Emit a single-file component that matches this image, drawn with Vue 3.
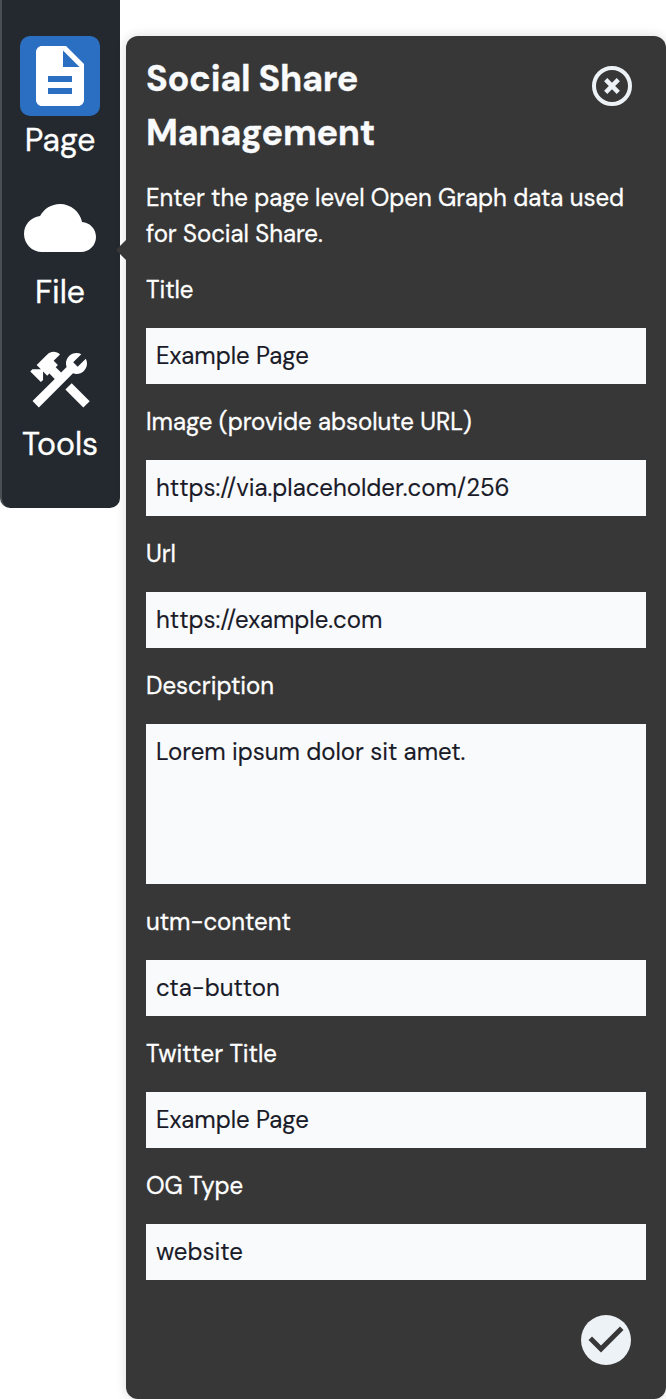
<script setup>
import { ref } from 'vue'

const tools = [
  { name: 'Page', icon: 'doc', active: true },
  { name: 'File', icon: 'cloud', active: false },
  { name: 'Tools', icon: 'build', active: false },
]

const fields = ref([
  { id: 'title', label: 'Title', value: 'Example Page' },
  { id: 'image', label: 'Image (provide absolute URL)', value: 'https://via.placeholder.com/256' },
  { id: 'url', label: 'Url', value: 'https://example.com' },
  { id: 'description', label: 'Description', value: 'Lorem ipsum dolor sit amet.', multiline: true },
  { id: 'utm', label: 'utm-content', value: 'cta-button' },
  { id: 'twitter', label: 'Twitter Title', value: 'Example Page' },
  { id: 'type', label: 'OG Type', value: 'website' },
])
</script>

<template>
  <div class="layout">
    <nav class="sidebar">
      <div v-for="t in tools" :key="t.name" class="tool">
        <span class="tool-icon" :class="{ active: t.active }">
          <svg viewBox="0 0 24 24" aria-hidden="true">
            <path v-if="t.icon === 'doc'" d="M14 2H6c-1.1 0-1.99.9-1.99 2L4 20c0 1.1.89 2 1.99 2H18c1.1 0 2-.9 2-2V8l-6-6zm2 16H8v-2h8v2zm0-4H8v-2h8v2zm-3-5V3.5L18.5 9H13z" />
            <path v-else-if="t.icon === 'cloud'" d="M19.35 10.04C18.67 6.59 15.64 4 12 4 9.11 4 6.6 5.64 5.35 8.04 2.34 8.36 0 10.91 0 14c0 3.31 2.69 6 6 6h13c2.76 0 5-2.24 5-5 0-2.64-2.05-4.78-4.65-4.96z" />
            <g v-else>
              <rect height="8.48" width="3" x="16.34" y="12.87" transform="matrix(0.7071 -0.7071 0.7071 0.7071 -6.8717 17.6255)" />
              <path d="M17.5,10c1.93,0,3.5-1.57,3.5-3.5c0-0.58-0.16-1.12-0.41-1.6l-2.7,2.7L16.4,6.11l2.7-2.7C18.62,3.16,18.08,3,17.5,3C15.57,3,14,4.57,14,6.5c0,0.41,0.08,0.8,0.21,1.16l-1.85,1.85l-1.78-1.78l0.71-0.71L9.88,5.61L12,3.49c-1.17-1.17-3.07-1.17-4.24,0L4.22,7.03l1.41,1.41H2.81L2.1,9.15l3.54,3.54l0.71-0.71V9.15l1.41,1.41l0.71-0.71l1.78,1.78l-7.41,7.41l2.12,2.12L16.34,9.79C16.7,9.92,17.09,10,17.5,10z" />
            </g>
          </svg>
        </span>
        <span class="tool-name">{{ t.name }}</span>
      </div>
    </nav>

    <section class="panel">
      <header class="head">
        <h1>Social Share<br />Management</h1>
        <svg class="close" viewBox="0 0 48 48" fill="none" aria-label="Close">
          <circle cx="24" cy="24" r="18" stroke-width="4" />
          <path d="M17.7 17.7l12.6 12.6M30.3 17.7L17.7 30.3" stroke-width="4.5" />
        </svg>
      </header>
      <p class="intro">Enter the page level Open Graph data used<br />for Social Share.</p>

      <div v-for="f in fields" :key="f.id" class="field">
        <label :for="f.id">{{ f.label }}</label>
        <textarea v-if="f.multiline" :id="f.id" v-model="f.value" class="control tall"></textarea>
        <input v-else :id="f.id" v-model="f.value" class="control" type="text" />
      </div>

      <footer class="foot">
        <svg viewBox="0 0 24 24" aria-label="Save">
          <circle cx="12" cy="12" r="10" fill="#edf2f7" />
          <path d="M10 17l-5-5 1.41-1.41L10 14.17l7.59-7.59L19 8l-9 9z" fill="#373737" />
        </svg>
      </footer>
    </section>
  </div>
</template>

<style>
body {
  background: #fff;
}
</style>

<style scoped>
.layout {
  display: flex;
  align-items: flex-start;
  gap: 6px;
  height: 1399px;
  overflow: hidden;
  font-family: "DM Sans", Lato, "Liberation Sans", sans-serif;
}
.sidebar {
  box-sizing: border-box;
  width: 120px;
  height: 508px;
  flex: none;
  display: flex;
  flex-direction: column;
  gap: 24px;
  padding-top: 36px;
  border-left: 2px solid #4a4f55;
  border-radius: 0 0 10px 10px;
  background: #242930;
  color: #fff;
}
.tool {
  display: flex;
  flex-direction: column;
  align-items: center;
  margin-left: -2px;
}
.tool-icon {
  display: flex;
  align-items: center;
  justify-content: center;
  width: 80px;
  height: 80px;
  border-radius: 10px;
}
.tool-icon.active {
  background: #2b6fc2;
}
.tool-icon svg {
  width: 72px;
  height: 72px;
  fill: #fff;
}
.tool-name {
  font-size: 32px;
  line-height: 48px;
  -webkit-text-stroke: 0.3px;
}
.panel {
  position: relative;
  box-sizing: border-box;
  width: 540px;
  height: 1363px;
  margin-top: 36px;
  padding: 16px 20px 0;
  border-radius: 12px;
  background: #373737;
  color: #fff;
  box-shadow: 0 0 12px rgba(0, 0, 0, 0.14);
}
.panel::before {
  content: "";
  position: absolute;
  left: -10px;
  top: 204px;
  border: solid transparent;
  border-width: 10px 10px 10px 0;
  border-right-color: #373737;
}
.head {
  display: flex;
  justify-content: space-between;
}
h1 {
  margin: 0;
  font-size: 36px;
  line-height: 54px;
  font-weight: 700;
  letter-spacing: -0.3px;
  color: #f9fafc;
  -webkit-text-stroke: 0.3px;
}
.close {
  width: 48px;
  height: 48px;
  margin: 10px 10px 0 0;
  stroke: #edf2f7;
}
.intro {
  margin: 20px 0 0;
  font-size: 24px;
  line-height: 36px;
  letter-spacing: -0.03px;
  white-space: nowrap;
  -webkit-text-stroke: 0.3px;
}
.field {
  margin-top: 20px;
  letter-spacing: -0.03px;
}
label {
  display: block;
  margin-bottom: 20px;
  font-size: 24px;
  line-height: 36px;
  -webkit-text-stroke: 0.3px;
}
.control {
  display: block;
  box-sizing: border-box;
  width: 100%;
  height: 56px;
  margin: 0;
  padding: 9px 10px 11px;
  border: 0;
  border-radius: 0;
  background: #f9fafc;
  color: #1a1b28;
  font-family: inherit;
  font-size: 24px;
  line-height: 36px;
  letter-spacing: inherit;
  resize: none;
  outline: none;
  -webkit-text-stroke: 0.15px;
}
.tall {
  height: 160px;
  padding: 10px;
}
.foot {
  display: flex;
  justify-content: flex-end;
  margin: 30px 10px 0 0;
}
.foot svg {
  width: 60px;
  height: 60px;
}
</style>
